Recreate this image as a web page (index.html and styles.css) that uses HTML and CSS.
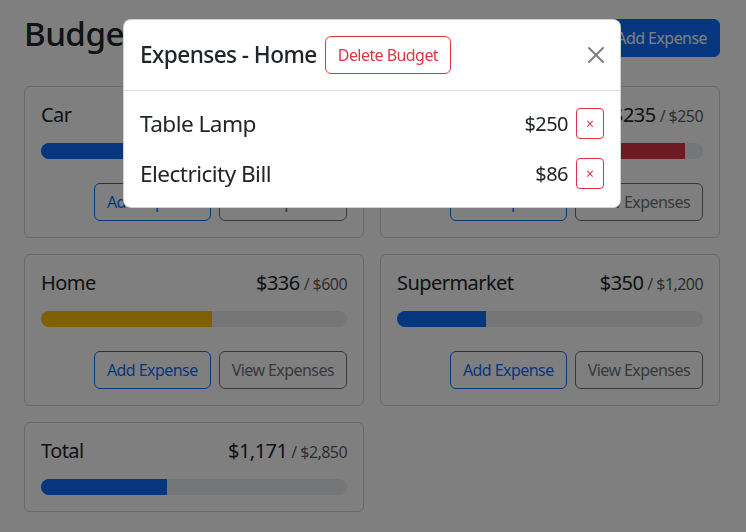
FILE: index.html
```html
<!DOCTYPE html>
<html lang="en">
<head>
<meta charset="utf-8">
<title>Budgets</title>
<link rel="stylesheet" href="styles.css">
</head>
<body>
<div class="container">
  <div class="header">
    <h1 class="page-title">Budgets</h1>
    <button class="btn btn-outline-primary">Add Budget</button>
    <button class="btn btn-primary">Add Expense</button>
  </div>
  <div class="grid">
    <div class="card">
      <div class="card-title">
        <div class="name">Car</div>
        <div class="amount">$250<span class="max">/ $800</span></div>
      </div>
      <div class="progress"><div class="bar bar-primary" style="width:31.25%"></div></div>
      <div class="actions">
        <button class="btn btn-outline-primary">Add Expense</button>
        <button class="btn btn-outline-secondary">View Expenses</button>
      </div>
    </div>
    <div class="card">
      <div class="card-title">
        <div class="name">Dining Out</div>
        <div class="amount">$235<span class="max">/ $250</span></div>
      </div>
      <div class="progress"><div class="bar bar-danger" style="width:94%"></div></div>
      <div class="actions">
        <button class="btn btn-outline-primary">Add Expense</button>
        <button class="btn btn-outline-secondary">View Expenses</button>
      </div>
    </div>
    <div class="card">
      <div class="card-title">
        <div class="name">Home</div>
        <div class="amount">$336<span class="max">/ $600</span></div>
      </div>
      <div class="progress"><div class="bar bar-warning" style="width:56%"></div></div>
      <div class="actions">
        <button class="btn btn-outline-primary">Add Expense</button>
        <button class="btn btn-outline-secondary">View Expenses</button>
      </div>
    </div>
    <div class="card">
      <div class="card-title">
        <div class="name">Supermarket</div>
        <div class="amount">$350<span class="max">/ $1,200</span></div>
      </div>
      <div class="progress"><div class="bar bar-primary" style="width:29.17%"></div></div>
      <div class="actions">
        <button class="btn btn-outline-primary">Add Expense</button>
        <button class="btn btn-outline-secondary">View Expenses</button>
      </div>
    </div>
    <div class="card">
      <div class="card-title">
        <div class="name">Total</div>
        <div class="amount">$1,171<span class="max">/ $2,850</span></div>
      </div>
      <div class="progress"><div class="bar bar-primary" style="width:41.09%"></div></div>
    </div>
  </div>
</div>
<div class="backdrop"></div>
<div class="modal">
  <div class="modal-content">
    <div class="modal-header">
      <div class="modal-title">
        <span>Expenses - Home</span>
        <button class="btn btn-outline-danger">Delete Budget</button>
      </div>
      <button class="btn-close" aria-label="Close">
        <svg viewBox="0 0 16 16" width="16" height="16"><path d="M.293.293a1 1 0 0 1 1.414 0L8 6.586 14.293.293a1 1 0 1 1 1.414 1.414L9.414 8l6.293 6.293a1 1 0 0 1-1.414 1.414L8 9.414l-6.293 6.293a1 1 0 0 1-1.414-1.414L6.586 8 .293 1.707a1 1 0 0 1 0-1.414z" fill="#000"/></svg>
      </button>
    </div>
    <div class="modal-body">
      <div class="expense">
        <div class="desc">Table Lamp</div>
        <div class="amt">$250</div>
        <button class="btn btn-sm btn-outline-danger">&times;</button>
      </div>
      <div class="expense">
        <div class="desc">Electricity Bill</div>
        <div class="amt">$86</div>
        <button class="btn btn-sm btn-outline-danger">&times;</button>
      </div>
    </div>
  </div>
</div>
</body>
</html>
```

FILE: styles.css
```css
* { box-sizing: border-box; }
body {
  margin: 0;
  padding-right: 2px;
  font-family: "Segoe UI", "Noto Sans", "Open Sans", sans-serif;
  font-size: 16px;
  line-height: 1.5;
  letter-spacing: -0.035em;
  color: #212529;
  background: #fff;
}
.container {
  max-width: 720px;
  margin: 0 auto;
  padding: 14px 12px 24px;
}
.header {
  display: flex;
  align-items: center;
  gap: 8px;
  margin-bottom: 24px;
}
.page-title {
  margin: 0 auto 8px 0;
  font-size: 33.19px;
  font-weight: 500;
  line-height: 1.2;
}
.grid {
  display: grid;
  grid-template-columns: repeat(2, 1fr);
  gap: 16px;
  align-items: start;
}
.card {
  border: 1px solid rgba(0,0,0,.175);
  border-radius: 6px;
  padding: 16px;
}
.card-title {
  display: flex;
  justify-content: space-between;
  align-items: baseline;
  font-size: 20px;
  line-height: 1.2;
  margin-bottom: 16px;
}
.amount { display: flex; align-items: baseline; }
.max {
  font-size: 16px;
  color: rgba(33,37,41,.75);
  margin-left: 4px;
}
.progress {
  display: flex;
  height: 16px;
  background: #e9ecef;
  border-radius: 50rem;
  overflow: hidden;
}
.bar { height: 100%; }
.bar-primary { background: #0d6efd; }
.bar-warning { background: #ffc107; }
.bar-danger { background: #dc3545; }
.actions {
  display: flex;
  justify-content: flex-end;
  gap: 8px;
  margin-top: 24px;
}
.btn {
  font-family: inherit;
  font-size: 16px;
  line-height: 1.5;
  letter-spacing: inherit;
  padding: 6px 12px;
  border: 1px solid transparent;
  border-radius: 6px;
  background: transparent;
  font-weight: 400;
  cursor: pointer;
}
.btn-primary { background: #0d6efd; border-color: #0d6efd; color: #fff; }
.btn-outline-primary { border-color: #0d6efd; color: #0d6efd; }
.btn-outline-secondary { border-color: #6c757d; color: #6c757d; }
.btn-outline-danger { border-color: #dc3545; color: #dc3545; }
.btn-sm {
  width: 28px;
  padding: 4px 0;
  font-size: 14px;
  border-radius: 4px;
  letter-spacing: 0;
}

.backdrop {
  position: fixed;
  inset: 0;
  background: rgba(0,0,0,.5);
}
.modal {
  position: fixed;
  top: 19px;
  left: 0;
  right: 2px;
  display: flex;
  justify-content: center;
}
.modal-content {
  width: 498px;
  background: #fff;
  border: 1px solid rgba(0,0,0,.175);
  border-radius: 8px;
}
.modal-header {
  display: flex;
  align-items: center;
  padding: 16px;
  border-bottom: 1px solid #dee2e6;
}
.modal-title {
  display: flex;
  align-items: center;
  gap: 8px;
  font-size: 22.64px;
  line-height: 1.5;
  font-weight: 500;
  letter-spacing: -0.025em;
}
.modal-title .btn { letter-spacing: -0.035em; }
.btn-close {
  display: flex;
  width: 24px;
  height: 24px;
  padding: 4px;
  margin: -8px -4px -8px auto;
  border: 0;
  background: transparent;
  opacity: .5;
}
.modal-body {
  padding: 16px;
  display: flex;
  flex-direction: column;
  gap: 16px;
}
.expense {
  display: flex;
  align-items: center;
  gap: 8px;
}
.desc {
  margin-right: auto;
  font-size: 22.64px;
  line-height: 1.5;
}
.amt { font-size: 20px; line-height: 1.5; }
```
